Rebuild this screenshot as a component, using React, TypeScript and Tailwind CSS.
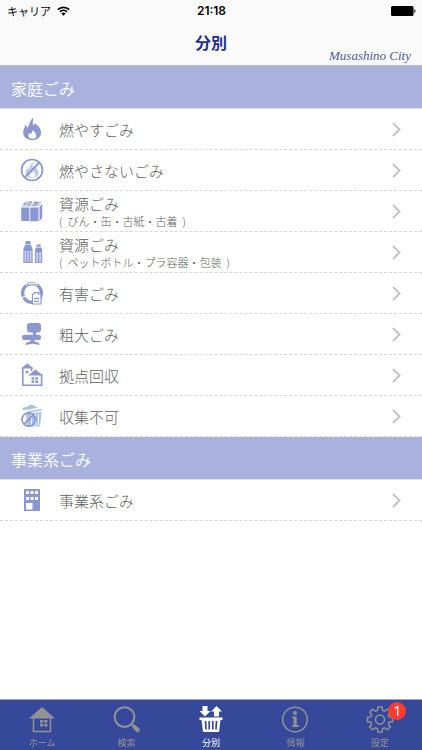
import type { ReactNode } from "react";

const INK = "#8b97d0";

function Icon({ children }: { children: ReactNode }) {
  return (
    <svg viewBox="0 0 24 24" className="size-6 shrink-0" fill="none" aria-hidden="true">
      {children}
    </svg>
  );
}

const FLAME =
  "M12.8 1c1.2 2.6-.8 4.4.2 6.2.6 1 1.9.6 1.6-1.2 3.2 2.300 6.4 5.4 6.4 9.4 0 4.600-3.800 7.600-8.600 7.600-5.200 0-9.200-2.800-9.200-7.600 0-3.200 1.600-4.600 2-7.600 1.100.7 1.600 1.700 1.800 3C9.800 9 8.600 4.800 12.800 1z";
const FLAME_CORE =
  "M12.6 13c1.600 1.800 3.800 3.600 3.800 6 0 1.800-1.500 2.800-3.800 2.800s-4.200-1-4.200-2.800c0-1.300.5-2.200 1.100-3 .5.3.8.7 1 1.200 1.300-1.100 2-2.200 2.100-4.200z";

const burnable = (
  <Icon>
    <path d={FLAME} fill={INK} />
    <path d={FLAME_CORE} fill="#fff" />
  </Icon>
);
const nonBurnable = (
  <Icon>
    <g transform="translate(3.5 3.5) scale(.72)">
      <path d={FLAME} fill="#c3cbea" />
      <path d={FLAME_CORE} fill="#fff" />
    </g>
    <circle cx="12" cy="12" r="10.5" stroke={INK} strokeWidth="1.7" />
    <path d="M19.3 4.700 4.700 19.300" stroke={INK} strokeWidth="1.900" />
  </Icon>
);
const bundle = (
  <Icon>
    <path d="M1.200 8.500h8.200v13.800l-8.200-.6zM10.300 8.500h8.200v13.800h-8.200zM19.500 8l2.700-3.200v14l-2.700 3.300z" fill={INK} />
    <path d="M1.500 7.500 5.500 2.500h16.500L18.500 7.500z" fill="#c5cceb" />
    <path d="M3.500 5.200 6 4M8 6.500 11 5M8.500 3.200h3.500M14 3.400l4 .2M13 6.800l4-2.200" stroke={INK} strokeWidth="1.300" />
    <path d="m9.600 8 4-5.500" stroke="#fff" strokeWidth="1" />
  </Icon>
);
const bottles = (
  <Icon>
    <path d="M5.500 1h5v3.200h-5zM5 4.800h6l.5 1.700 1 1.500v3.500h-9V8l1-1.500zM16.500 4.500h4.200v2.300h-4.200zM16 7.500h5.200l.9 2v3.300h-7V9.500z" fill={INK} />
    <path d="M3.500 11.500h9v11.300h-9zM15.100 12.800h7v10h-7z" fill="#cbd1ee" />
    <path d="M4 11.500v11.300M6.700 11.500v11.300M9.300 11.500v11.300M12 11.500v11.300M15.600 12.800v10M18.600 12.800v10M21.600 12.800v10" stroke={INK} strokeWidth="1.100" />
    <path d="M3.500 22.300h9M15.100 22.300h7" stroke={INK} strokeWidth="1" />
  </Icon>
);
const hazardous = (
  <Icon>
    <circle cx="12" cy="12" r="9.400" stroke={INK} strokeWidth="3.200" />
    <path d="M8.500 2.900q3.500-1.200 7 0" stroke="#fff" strokeWidth="1.300" />
    <path d="M0 17.500 7 14.500M15.500 0 17 5M7 .5 6.500 5" stroke="#fff" strokeWidth="1.100" />
    <path d="M12.500 13h2v-1.500h4V13h2.500v10H12.500z" fill="#fff" stroke={INK} strokeWidth="1.200" />
    <path d="M14.200 17.500h5M14.200 20.300h5" stroke={INK} strokeWidth="1.300" />
  </Icon>
);
const chair = (
  <Icon>
    <rect x="7" y="1" width="14" height="9.500" rx="3" fill={INK} />
    <path d="M13 10h3v3.300h-3zM10.500 17.500h4v3h-4z" fill={INK} />
    <rect x="2" y="12.800" width="19" height="5.200" rx="2.600" fill={INK} />
    <path d="M5.500 23c0-2.400 2.500-3.400 7-3.400s7 1 7 3.400l-7-1.200z" fill={INK} />
  </Icon>
);
const base = (
  <Icon>
    <path d="M.8 5.500 7.300.5l6.500 5z" fill={INK} />
    <path d="M2.800 5v17.200h18.800V11M11.500 5v3" stroke={INK} strokeWidth="1.600" />
    <path d="M8 12.500 15.500 6.500 23.200 12.500z" fill={INK} />
    <circle cx="7" cy="9" r="1.500" fill={INK} />
    <path d="M11.500 14.200h2.700v2.500h-2.700zM15.300 14.200H18v2.500h-2.700zM11.500 17.600h2.700v2.300h-2.700zM15.300 17.600H18v2.300h-2.700z" fill={INK} />
  </Icon>
);
const rejected = (
  <Icon>
    <path d="M2 6 3.500 3.500 8 2.500 10 .8l4 .4L16 3l2.500.5L9 5.500z" fill="#a9c1e6" />
    <path d="M7 7.500 21.500 5v1.600L7 8.700z" fill="#a9c1e6" />
    <path d="M6 9.500 21.500 8 20 22.500H7z" fill="#a9c1e6" />
    <path d="M11.500 10v12M15.500 9.500V22M18.700 9.500 18.200 22" stroke="#fff" strokeWidth=".9" />
    <circle cx="8.700" cy="15.500" r="6.700" stroke={INK} strokeWidth="1.700" />
    <path d="M13.400 10.800 4 20.200" stroke={INK} strokeWidth="1.700" />
  </Icon>
);
const building = (
  <Icon>
    <path d="M4 1h16v22H4z" fill={INK} />
    <path d="M6 3h3v3H6zM10.500 3h3v3h-3zM15 3h3v3h-3zM6 9h3v3H6zM10.500 9h3v3h-3zM15 9h3v3h-3zM6 15h6.500v6.500H6z" fill="#fff" />
  </Icon>
);

type Item = { label: string; note?: string; icon: ReactNode };

const household: Item[] = [
  { label: "燃やすごみ", icon: burnable },
  { label: "燃やさないごみ", icon: nonBurnable },
  { label: "資源ごみ", note: "びん・缶・古紙・古着", icon: bundle },
  { label: "資源ごみ", note: "ペットボトル・プラ容器・包装", icon: bottles },
  { label: "有害ごみ", icon: hazardous },
  { label: "粗大ごみ", icon: chair },
  { label: "拠点回収", icon: base },
  { label: "収集不可", icon: rejected },
];
const business: Item[] = [{ label: "事業系ごみ", icon: building }];

function Section({ title, items }: { title: string; items: Item[] }) {
  return (
    <section>
      <h2 className="flex h-[43px] items-center border-b border-[#dde0f2] bg-[#a8b1de] bg-[linear-gradient(#b0b8e240_1px,transparent_1px),linear-gradient(90deg,#b0b8e240_1px,transparent_1px)] bg-size-[4px_4px] px-[11px] pt-[2px] text-base font-[350] text-white">
        {title}
      </h2>
      <ul>
        {items.map((item) => (
          <li key={item.label + (item.note ?? "")} className="border-b border-dashed border-[#d8d8d8]">
            <button className="flex h-10 w-full items-center gap-[15px] pr-[19px] pl-5 text-left">
              {item.icon}
              <span className="flex-1 pt-[2px] font-light text-[#606060]">
                <span className="block text-[15px] leading-[18px]">{item.label}</span>
                {item.note && (
                  <span className="flex gap-[5px] text-[11px] leading-4">
                    <span>(</span>
                    <span>{item.note}</span>
                    <span>)</span>
                  </span>
                )}
              </span>
              <svg viewBox="0 0 12 16" className="h-4 w-3" fill="none" aria-hidden="true">
                <path d="M2 2l6.500 6.500L2 15" stroke="#c4c4c8" strokeWidth="2" />
              </svg>
            </button>
          </li>
        ))}
      </ul>
    </section>
  );
}

const GRAY = "#929294";

const tabs: { label: string; active?: boolean; badge?: string; icon: ReactNode }[] = [
  {
    label: "ホーム",
    icon: (
      <>
        <path d="M14 1 27 12.500H1z" fill={GRAY} />
        <path d="M5.500 12v13.500h17V12" stroke={GRAY} strokeWidth="1.500" />
        <path d="M12 14h3.300v2.700H12zM16.200 14h3.300v2.700h-3.300zM12 17.700h3.300v2.700H12zM16.200 17.700h3.300v2.700h-3.300z" fill={GRAY} />
      </>
    ),
  },
  {
    label: "検索",
    icon: (
      <>
        <circle cx="11.500" cy="11" r="9.800" stroke={GRAY} strokeWidth="2" />
        <path d="M18.500 18 21 20" stroke={GRAY} strokeWidth="2" />
        <path d="m19.500 21 2-2 5.500 4.500-2.700 2.700z" fill={GRAY} stroke={GRAY} />
      </>
    ),
  },
  {
    label: "分別",
    active: true,
    icon: (
      <>
        <path d="M5.500 0h5v5h3L8 10.500 2.500 5h3zM17 10.500h5v-5h3L19.500 0 14 5.500h3zM2.500 11.500h23V14h-23z" fill="#fff" />
        <path d="M4.500 14h19l-1.500 12H6z" fill="#fff" />
        <path d="m8.500 15 .5 8.500M12.200 15v8.500M15.800 15v8.500M19.500 15 19 23.500" stroke="#36489a" strokeWidth="1.700" />
      </>
    ),
  },
  {
    label: "情報",
    icon: (
      <>
        <circle cx="14" cy="13.500" r="12.300" stroke={GRAY} strokeWidth="1.500" />
        <circle cx="14" cy="7" r="2" fill={GRAY} />
        <path d="M11 10.500h4.700v8.800H18V21h-7v-1.700h1.500v-7H11z" fill={GRAY} />
      </>
    ),
  },
  {
    label: "設定",
    badge: "1",
    icon: (
      <>
        <path
          d="M12 1.500h4l.6 3.400 2 .8 2.900-2 2.800 2.800-2 2.900.8 2 3.400.6v4l-3.400.6-.8 2 2 2.900-2.800 2.800-2.900-2-2 .8-.6 3.400h-4l-.6-3.400-2-.8-2.900 2-2.800-2.800 2-2.900-.8-2-3.400-.6v-4l3.400-.6.8-2-2-2.900 2.800-2.800 2.900 2 2-.8z"
          transform="translate(0 -.5)"
          stroke={GRAY}
          strokeWidth="1.500"
        />
        <circle cx="14" cy="13.500" r="4.500" stroke={GRAY} strokeWidth="1.500" />
      </>
    ),
  },
];

export default function App() {
  return (
    <div className="flex min-h-screen flex-col bg-white font-['Noto_Sans_CJK_JP',sans-serif]">
      <header className="border-b border-[#b9bac4] bg-[#fafafa]">
        <div className="grid h-5 grid-cols-3 items-center pt-px pr-[6px] pl-[7px] text-black">
          <div className="flex items-center gap-[6px] text-[11px] leading-5 font-normal">
            キャリア
            <svg viewBox="0 0 13 10" className="h-[10px] w-[13px]" fill="none" aria-label="Wi-Fi">
              <path d="M.8 3.600a8.200 8.200 0 0 1 11.400 0M2.900 5.800a5.200 5.200 0 0 1 7.200 0" stroke="#000" strokeWidth="1.700" />
              <path d="M6.500 9.800 4.400 7.600a3 3 0 0 1 4.200 0z" fill="#000" />
            </svg>
          </div>
          <time className="text-center font-['Inter',sans-serif] text-xs leading-5 font-semibold">21:18</time>
          <svg viewBox="0 0 25 10" className="h-[10px] w-[25px] justify-self-end" aria-label="バッテリー">
            <rect width="22.500" height="10" rx="1.500" />
            <path d="M23.300 3.200c1.500.2 1.500 3.400 0 3.600z" />
          </svg>
        </div>
        <div className="grid h-[45px] grid-cols-3 px-[11px]">
          <h1 className="col-start-2 pt-[10px] text-center text-base leading-6 font-bold text-[#1d2f8b]">分別</h1>
          <p className="self-end justify-self-end font-['Liberation_Serif',serif] text-[13px] leading-[18px] whitespace-nowrap text-[#4f5a9c] italic">
            Musashino City
          </p>
        </div>
      </header>

      <main className="flex-1">
        <Section title="家庭ごみ" items={household} />
        <Section title="事業系ごみ" items={business} />
      </main>

      <nav className="sticky bottom-0 grid h-[51px] grid-cols-5 border-t border-[#a3a8bd] bg-[#36489a]">
        {tabs.map((tab) => (
          <button key={tab.label} className="flex h-[50px] flex-col items-center pt-[6px]">
            <span className="relative h-[27px]">
              <svg viewBox="0 0 28 27" className="h-[27px] w-7" fill="none" aria-hidden="true">
                {tab.icon}
              </svg>
              {tab.badge && (
                <span className="absolute -top-1 -right-3 size-[18px] rounded-full bg-[#ff3b30] text-center font-['Inter',sans-serif] text-[13px] leading-[18px] text-white">
                  {tab.badge}
                </span>
              )}
            </span>
            <span className={`text-[9px] leading-[19px] ${tab.active ? "text-white" : "text-[#929294]"}`}>{tab.label}</span>
          </button>
        ))}
      </nav>
    </div>
  );
}
